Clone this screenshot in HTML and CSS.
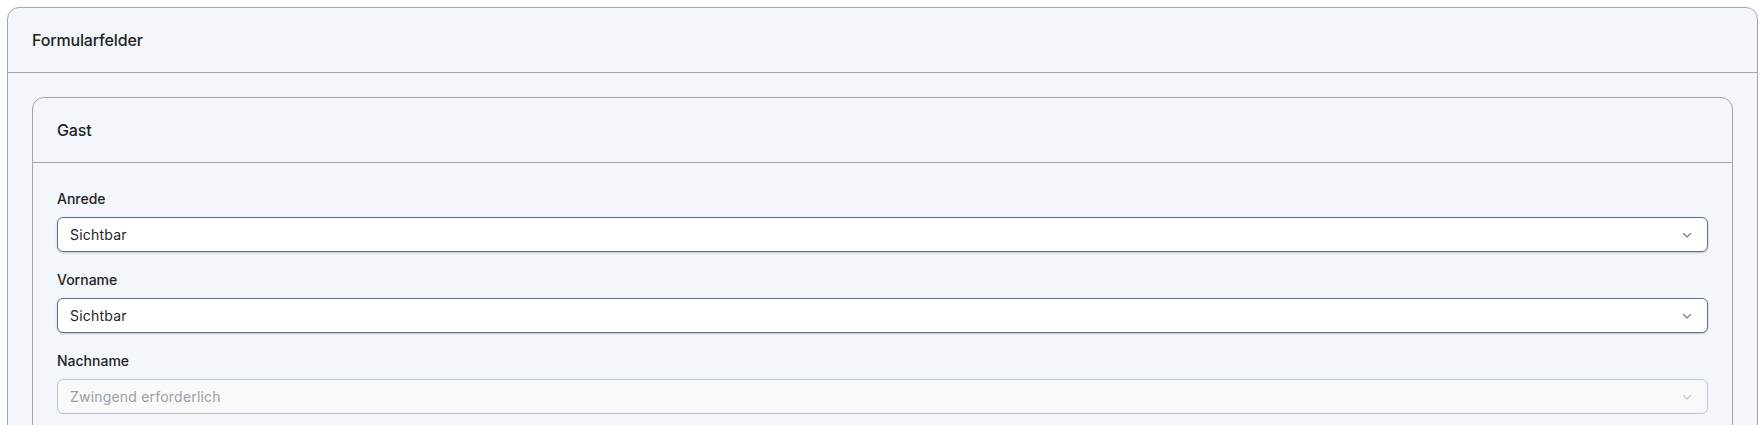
FILE: index.html
```html
<!DOCTYPE html>
<html lang="de">
<head>
<meta charset="utf-8">
<title>Formularfelder</title>
<link rel="stylesheet" href="styles.css">
</head>
<body>
<section class="card">
  <header class="card-header">Formularfelder</header>
  <div class="card-body">
    <section class="card inner">
      <header class="card-header">Gast</header>
      <div class="card-body fields">
        <div class="field">
          <label class="label">Anrede</label>
          <div class="select">
            <span>Sichtbar</span>
            <svg class="chev" width="12" height="12" viewBox="0 0 12 12"><path d="M2.5 4.5 6 8 9.5 4.5" fill="none" stroke="currentColor" stroke-width="1.2" stroke-linecap="round" stroke-linejoin="round"/></svg>
          </div>
        </div>
        <div class="field">
          <label class="label">Vorname</label>
          <div class="select">
            <span>Sichtbar</span>
            <svg class="chev" width="12" height="12" viewBox="0 0 12 12"><path d="M2.5 4.5 6 8 9.5 4.5" fill="none" stroke="currentColor" stroke-width="1.2" stroke-linecap="round" stroke-linejoin="round"/></svg>
          </div>
        </div>
        <div class="field">
          <label class="label">Nachname</label>
          <div class="select disabled">
            <span>Zwingend erforderlich</span>
            <svg class="chev" width="12" height="12" viewBox="0 0 12 12"><path d="M2.5 4.5 6 8 9.5 4.5" fill="none" stroke="currentColor" stroke-width="1.2" stroke-linecap="round" stroke-linejoin="round"/></svg>
          </div>
        </div>
      </div>
    </section>
  </div>
</section>
</body>
</html>
```
FILE: styles.css
```css
html, body {
  margin: 0;
  background: #ffffff;
}
body {
  padding: 7px 4px 0 7px;
  font-family: Inter, "Noto Sans", sans-serif;
  color: #1e2226;
  height: 425px;
  box-sizing: border-box;
  overflow: hidden;
}
.card {
  border: 1px solid #a3a6aa;
  border-radius: 12px;
  background: #f3f6fa;
}
.card-header {
  display: flex;
  align-items: center;
  padding: 0 24px;
  font-size: 16px;
  font-weight: 500;
  letter-spacing: -0.15px;
  border-bottom: 1px solid #a3a6aa;
  box-sizing: border-box;
  height: 65px;
}
.card-body {
  padding: 24px;
}
.fields {
  display: flex;
  flex-direction: column;
  gap: 16px;
}
.field {
  display: flex;
  flex-direction: column;
  gap: 6px;
}
.label {
  font-size: 14px;
  font-weight: 500;
  line-height: 24px;
  color: #1e2226;
}
.select {
  height: 35px;
  box-sizing: border-box;
  border: 1px solid #5b7189;
  border-radius: 6px;
  background: #ffffff;
  box-shadow: 0 1px 2px rgba(40, 60, 80, 0.25);
  display: flex;
  align-items: center;
  justify-content: space-between;
  padding: 0 14px 0 12px;
  font-size: 14px;
  letter-spacing: 0.2px;
  color: #1e2226;
}
.select .chev {
  color: #7a7f85;
}
.select.disabled {
  border-color: #b9c5d1;
  background: #f7f9fb;
  box-shadow: none;
  color: #9aa0a6;
}
.select.disabled .chev {
  color: #c0c5ca;
}
```
